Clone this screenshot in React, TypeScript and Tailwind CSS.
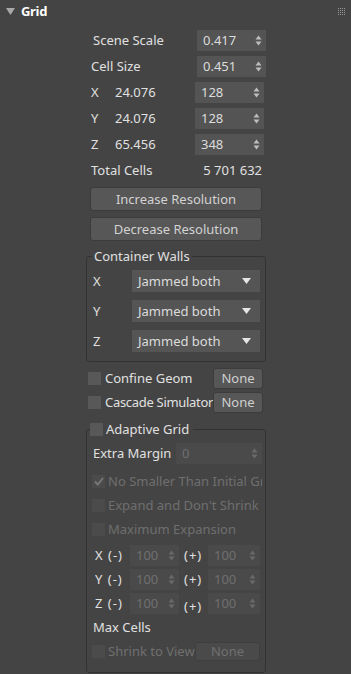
import React from "react";

const font = { fontFamily: '"Noto Sans", "DejaVu Sans", sans-serif' };

function Arrows({ dim }: { dim?: boolean }) {
  const c = dim ? "#6a6a6a" : "#bdbdbd";
  return (
    <svg width="7" height="11" viewBox="0 0 7 11" className="shrink-0">
      <path d="M3.5 0.5 L6.5 4.5 L0.5 4.5 Z" fill={c} />
      <path d="M3.5 10.5 L6.5 6.5 L0.5 6.5 Z" fill={c} />
    </svg>
  );
}

function Spinner({ value, w, dim }: { value: string; w: string; dim?: boolean }) {
  return (
    <div
      className={`${w} shrink-0 h-[21px] flex items-center justify-between pl-[6px] pr-[4px] ${
        dim ? "bg-[#4a4a4a] text-[#6f6f6f]" : "bg-[#545454] text-[#dcdcdc]"
      }`}
    >
      <span>{value}</span>
      <Arrows dim={dim} />
    </div>
  );
}

function Check({ checked, dim }: { checked?: boolean; dim?: boolean }) {
  return (
    <div
      className={`w-[13px] h-[13px] shrink-0 flex items-center justify-center ${
        dim ? "bg-[#4b4b4b]" : "bg-[#585858]"
      }`}
    >
      {checked && (
        <svg width="10" height="9" viewBox="0 0 10 9">
          <path d="M1 4.5 L3.8 7.5 L9 1" stroke="#777" strokeWidth="2" fill="none" />
        </svg>
      )}
    </div>
  );
}

function Select() {
  return (
    <div className="w-[128px] h-[22px] bg-[#555555] flex items-center justify-between pl-[6px] pr-[9px] text-[#dcdcdc]">
      <span>Jammed both</span>
      <svg width="9" height="6" viewBox="0 0 9 6">
        <path d="M0 0 L9 0 L4.5 6 Z" fill="#e6e6e6" />
      </svg>
    </div>
  );
}

function NoneBtn({ w, dim }: { w: string; dim?: boolean }) {
  return (
    <div
      className={`${w} shrink-0 flex items-center justify-center rounded-[3px] border ${
        dim
          ? "h-[19px] bg-[#4a4a4a] border-[#3e3e3e] text-[#707070]"
          : "h-[21px] bg-[#575757] border-[#3c3c3c] text-[#cfcfcf]"
      }`}
    >
      None
    </div>
  );
}

function ExpRow({ axis, plusOffset }: { axis: string; plusOffset?: boolean }) {
  return (
    <div className="flex items-center h-[21px]">
      <span className="w-[43px] pl-[8px] text-[#e0e0e0] whitespace-nowrap tracking-[1px]">
        {axis} (-)
      </span>
      <Spinner value="100" w="w-[49px]" dim />
      <span className={`w-[29px] pl-[5px] text-[#e0e0e0] tracking-[1px] ${plusOffset ? "mt-[6px]" : ""}`}>
        (+)
      </span>
      <Spinner value="100" w="w-[52px]" dim />
    </div>
  );
}

export default function App() {
  return (
    <div
      className="w-[351px] h-[674px] bg-[#444444] text-[13px] leading-none text-[#e0e0e0] overflow-hidden"
      style={font}
    >
      <div className="h-[22px] flex items-center relative">
        <svg width="9" height="7" viewBox="0 0 9 7" className="ml-[6px]">
          <path d="M0 0 L9 0 L4.5 7 Z" fill="#a8a8a8" />
        </svg>
        <span className="ml-[6px] font-bold text-white text-[13px] tracking-[-0.3px]">Grid</span>
        <div className="ml-auto mr-[6px] grid grid-cols-4 gap-[1px]">
          {Array.from({ length: 16 }).map((_, i) => (
            <div key={i} className="w-[1px] h-[1px] bg-[#9a9a9a]" />
          ))}
        </div>
      </div>

      <div className="ml-[86px] w-[180px] mt-[8px] flex flex-col">
        <div className="flex flex-col gap-[5px]">
          <div className="flex items-center justify-between">
            <span className="pl-[7px]">Scene Scale</span>
            <Spinner value="0.417" w="w-[69px]" />
          </div>
          <div className="flex items-center justify-between">
            <span className="pl-[5px]">Cell Size</span>
            <Spinner value="0.451" w="w-[69px]" />
          </div>
          {[
            ["X", "24.076", "128"],
            ["Y", "24.076", "128"],
            ["Z", "65.456", "348"],
          ].map(([a, v, n]) => (
            <div key={a} className="flex items-center">
              <span className="pl-[5px] w-[29px]">{a}</span>
              <span className="w-[80px]">{v}</span>
              <Spinner value={n} w="w-[69px]" />
            </div>
          ))}
        </div>
        <div className="flex items-center justify-between h-[18px] mt-[6px]">
          <span className="pl-[5px]">Total Cells</span>
          <span className="pr-[4px]">5 701 632</span>
        </div>

        <div className="mt-[8px] flex flex-col gap-[6px] px-[4px]">
          <div className="h-[24px] rounded-[3px] bg-[#575757] border border-[#3c3c3c] flex items-center justify-center text-[#d2d2d2]">
            Increase Resolution
          </div>
          <div className="h-[24px] rounded-[3px] bg-[#575757] border border-[#3c3c3c] flex items-center justify-center text-[#d2d2d2]">
            Decrease Resolution
          </div>
        </div>

        <fieldset className="mt-[9px] border border-[#323232] rounded-[3px] pb-[9px] flex flex-col gap-[8px] min-w-0">
          <legend className="ml-[5px] px-[2px]">Container Walls</legend>
          {["X", "Y", "Z"].map((a, i) => (
            <div key={a} className={`flex items-center ${i === 0 ? "mt-[7px]" : ""}`}>
              <span className="pl-[6px] w-[45px]">{a}</span>
              <Select />
            </div>
          ))}
        </fieldset>

        <div className="mt-[6px] flex flex-col gap-[3px]">
          <div className="flex items-center">
            <div className="pl-[2px]">
              <Check />
            </div>
            <span className="ml-[4px] w-[108px]">Confine Geom</span>
            <NoneBtn w="w-[50px]" />
          </div>
          <div className="flex items-center">
            <div className="pl-[2px]">
              <Check />
            </div>
            <span className="ml-[4px] w-[108px] whitespace-nowrap tracking-[-0.3px]">Cascade Simulator</span>
            <NoneBtn w="w-[50px]" />
          </div>
        </div>

        <fieldset className="mt-[10px] border border-[#323232] rounded-[3px] pb-[6px] flex flex-col h-[250px] min-w-0">
          <legend className="ml-[3px] pr-[4px] flex items-center gap-[3px]">
            <Check />
            <span>Adaptive Grid</span>
          </legend>
          <div className="flex items-center mt-[7px]">
            <span className="pl-[6px] w-[89px]">Extra Margin</span>
            <Spinner value="0" w="w-[86px]" dim />
          </div>
          <div className="flex flex-col gap-[11px] mt-[11px] text-[#6f6f6f] pl-[5px]">
            <div className="flex items-center gap-[3px] whitespace-nowrap overflow-hidden w-[170px]">
              <Check checked dim />
              <span>No Smaller Than Initial Grid</span>
            </div>
            <div className="flex items-center gap-[3px]">
              <Check dim />
              <span>Expand and Don't Shrink</span>
            </div>
            <div className="flex items-center gap-[3px]">
              <Check dim />
              <span>Maximum Expansion</span>
            </div>
          </div>
          <div className="flex flex-col gap-[3px] mt-[9px]">
            <ExpRow axis="X" />
            <ExpRow axis="Y" />
            <ExpRow axis="Z" plusOffset />
          </div>
          <div className="mt-[6px] pl-[6px] h-[14px] flex items-center">Max Cells</div>
          <div className="mt-[8px] flex items-center pl-[5px] text-[#6f6f6f]">
            <Check dim />
            <span className="ml-[3px] w-[87px]">Shrink to View</span>
            <NoneBtn w="w-[65px]" dim />
          </div>
        </fieldset>
      </div>
    </div>
  );
}
